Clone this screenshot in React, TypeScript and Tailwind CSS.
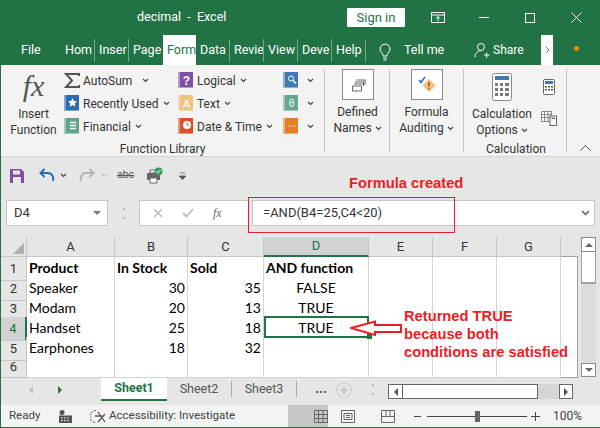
import React from 'react'

const ui = 'font-["Roboto",sans-serif]'
const cellFont = 'font-["Lato",sans-serif]'

const Caret = ({ className = '' }: { className?: string }) => (
  <svg width="7" height="5" viewBox="0 0 7 5" className={className}>
    <path d="M1 1l2.5 2.5L6 1" fill="none" stroke="#444" strokeWidth="1.2" />
  </svg>
)

function BookIcon({ color, children }: { color: string; children: React.ReactNode }) {
  return (
    <svg width="16" height="17" viewBox="0 0 16 17" className="shrink-0">
      <rect x="0" y="0" width="15" height="16" fill={color} opacity="0.55" />
      <rect x="2" y="0" width="13" height="15" fill={color} />
      {children}
    </svg>
  )
}

function FnRow({ icon, label, caretGap }: { icon: React.ReactNode; label: string; caretGap: string }) {
  return (
    <div className="flex h-[23px] items-center">
      <div className="flex w-[19px] justify-start">{icon}</div>
      <span className="text-[12px] whitespace-nowrap text-[#333]">{label}</span>
      <Caret className={caretGap} />
    </div>
  )
}

const tabs = ['Hom', 'Inser', 'Page', 'Form', 'Data', 'Revie', 'View', 'Deve', 'Help']

function TitleBar() {
  return (
    <div className="flex h-[35px] items-center text-white">
      <div className="w-[346px] pl-[136px] text-[12.5px] whitespace-nowrap">decimal&nbsp; -&nbsp; Excel</div>
      <div className="flex h-[19px] w-[58px] items-center justify-center rounded-[1px] bg-white text-[13px] text-[#217346]">Sign in</div>
      <svg width="14" height="11" viewBox="0 0 14 11" className="ml-[26px]">
        <path d="M.5.5h13v10H.5zM.5 3h13M7 9V4.5M5 6.500l2-2 2 2" fill="none" stroke="#fff" />
      </svg>
      <div className="ml-[34px] h-px w-[10px] bg-white" />
      <div className="ml-[36px] h-[10px] w-[10px] border border-white" />
      <svg width="11" height="11" viewBox="0 0 11 11" className="ml-[36px]">
        <path d="M.5.5l10 10M10.500.5l-10 10" stroke="#fff" fill="none" />
      </svg>
    </div>
  )
}

function TabRow() {
  return (
    <div className="flex h-[30px] items-stretch text-[12.5px] text-white">
      <div className="flex w-[60px] items-center pl-[20px]">File</div>
      {tabs.map((t, i) => (
        <div
          key={t}
          className={
            t === 'Form'
              ? 'flex w-[33px] items-center overflow-hidden bg-white pl-[4px] whitespace-nowrap text-[#217346]'
              : `my-[3px] flex h-[23px] w-[34px] items-center self-end overflow-hidden pl-[4px] whitespace-nowrap ${i === 2 ? '' : 'border-r border-[#6fa88a]'}`
          }
        >
          {t}
        </div>
      ))}
      <svg width="14" height="20" viewBox="0 0 14 20" className="mt-[7px] ml-[12px]">
        <path d="M7 2a5 5 0 0 0-3 9c1 1 1 2 1 3h4c0-1 0-2 1-3a5 5 0 0 0-3-9zM5 16h4M5.500 18h3" fill="none" stroke="#fff" />
      </svg>
      <div className="ml-[12px] flex w-[61px] items-center whitespace-nowrap">Tell me</div>
      <svg width="16" height="17" viewBox="0 0 16 17" className="mt-[7px] ml-[9px]">
        <path d="M7 1.500a3.500 3.500 0 1 1 0 7 3.500 3.500 0 0 1 0-7zM1 15c0-4 2.500-6 6-6.500M10 13h5.500M12.700 10.500v5.500" fill="none" stroke="#fff" />
      </svg>
      <div className="ml-[3px] flex w-[48px] items-center text-[12px] whitespace-nowrap">Share</div>
      <div className="flex w-[12px] items-center justify-center bg-white">
        <svg width="5" height="8" viewBox="0 0 5 8">
          <path d="M1 1l3 3-3 3" fill="none" stroke="#777" />
        </svg>
      </div>
      <div className="mt-[11px] ml-[21px] h-[5px] w-[5px] rounded-full bg-[#f28c0f]" />
    </div>
  )
}

function BigBox({ children }: { children: React.ReactNode }) {
  return (
    <div className="flex h-[31px] w-[32px] items-center justify-center border border-[#8a8a8a] bg-white">{children}</div>
  )
}

function Ribbon() {
  return (
    <div className="flex h-[92px] items-stretch border-b border-[#d5d5d5] bg-[#f3f3f3] text-[12px] leading-[16px] text-[#333]">
      {/* function library */}
      <div className="relative flex w-[323px] pt-[4px] pl-[3px]">
        <div className="flex w-[59px] flex-col items-center">
          <div className='h-[37px] font-["Liberation_Serif",serif] text-[30px] leading-[33px] text-[#555] italic'>fx</div>
          <div className="text-center leading-[16px]">
            Insert
            <br />
            Function
          </div>
        </div>
        <div className="flex w-[114px] flex-col pl-[1px]">
          <FnRow
            label="AutoSum"
            caretGap="ml-[10px]"
            icon={
              <svg width="16" height="15" viewBox="0 0 16 15">
                <path d="M15 3V1H2l6 6.500L2 14h13v-2" fill="none" stroke="#555" strokeWidth="2" />
              </svg>
            }
          />
          <FnRow
            label="Recently Used"
            caretGap="ml-[4px]"
            icon={
              <BookIcon color="#2b6cb0">
                <path d="M8.500 3l1.400 3 3.100.3-2.300 2.200.6 3.200-2.800-1.600-2.800 1.600.6-3.200L4 6.300 7.100 6z" fill="#fff" />
              </BookIcon>
            }
          />
          <FnRow
            label="Financial"
            caretGap="ml-[4px]"
            icon={
              <BookIcon color="#5fa58c">
                <path d="M6 4.500h6M6 7.500h6M6 10.500h6" stroke="#fff" strokeWidth="1.600" />
              </BookIcon>
            }
          />
        </div>
        <div className="flex w-[106px] flex-col pl-px">
          <FnRow
            label="Logical"
            caretGap="ml-[4px]"
            icon={
              <BookIcon color="#7f4fa8">
                <text x="8.500" y="12.500" textAnchor="middle" fontSize="12" fontWeight="700" fill="#fff" fontFamily="Liberation Sans">?</text>
              </BookIcon>
            }
          />
          <FnRow
            label="Text"
            caretGap="ml-[4px]"
            icon={
              <BookIcon color="#eec27f">
                <text x="8.500" y="12.500" textAnchor="middle" fontSize="11" fill="#fff" fontFamily="Liberation Sans">A</text>
              </BookIcon>
            }
          />
          <FnRow
            label="Date & Time"
            caretGap="ml-[4px]"
            icon={
              <BookIcon color="#d9502e">
                <circle cx="9" cy="7" r="4" fill="#fff" />
                <path d="M9 4.500V7h2" fill="none" stroke="#d9502e" />
              </BookIcon>
            }
          />
        </div>
        <div className="flex w-[40px] flex-col">
          <FnRow
            label=""
            caretGap="ml-[5px]"
            icon={
              <BookIcon color="#3f78b5">
                <circle cx="8" cy="6.500" r="2.500" fill="none" stroke="#fff" />
                <path d="M10 8.500l3 3" stroke="#fff" strokeWidth="1.500" />
              </BookIcon>
            }
          />
          <FnRow
            label=""
            caretGap="ml-[5px]"
            icon={
              <BookIcon color="#68a890">
                <text x="8.500" y="12" textAnchor="middle" fontSize="10" fill="#fff" fontFamily="Liberation Sans">θ</text>
              </BookIcon>
            }
          />
          <FnRow
            label=""
            caretGap="ml-[5px]"
            icon={
              <BookIcon color="#e67e22">
                <path d="M5 8h1.500M8 8h1.500M11 8h1.500" stroke="#fff" />
              </BookIcon>
            }
          />
        </div>
        <div className="absolute bottom-[-1px] left-0 w-[323px] text-center leading-[16px]">Function Library</div>
      </div>
      {/* defined names */}
      <div className="my-[4px] flex w-[65px] flex-col items-center border-l border-[#c4c4c4] pl-[1px]">
        <BigBox>
          <svg width="18" height="18" viewBox="0 0 18 18">
            <path d="M3.500 10h9v5h-9zM5 8h9M6 6h9M7.500 4h9M14.500 10V6M16 9V4" fill="none" stroke="#666" />
          </svg>
        </BigBox>
        <div className="mt-[4px] text-center leading-[16px]">
          Defined
          <br />
          <span className="inline-flex items-center gap-[3px]">
            Names <Caret />
          </span>
        </div>
      </div>
      {/* formula auditing */}
      <div className="my-[4px] flex w-[74px] flex-col items-center border-l border-[#c4c4c4]">
        <BigBox>
          <svg width="20" height="18" viewBox="0 0 20 18">
            <path d="M2 4l2 2.500L8 1" fill="none" stroke="#2b6cb0" strokeWidth="1.500" />
            <path d="M12 3l6.500 6.500L12 16 5.500 9.500z" fill="#f2c078" />
            <path d="M12 6v4.500M12 11.800v1.400" stroke="#c8401e" strokeWidth="1.500" />
          </svg>
        </BigBox>
        <div className="mt-[4px] text-center leading-[16px]">
          Formula
          <br />
          <span className="inline-flex items-center gap-[3px] whitespace-nowrap">
            Auditing <Caret />
          </span>
        </div>
      </div>
      {/* calculation */}
      <div className="relative my-[4px] flex w-[103px] border-l border-[#c4c4c4]">
        <div className="flex w-[76px] flex-col items-center pt-[4px]">
          <svg width="20" height="28" viewBox="0 0 20 28">
            <rect x=".5" y=".5" width="19" height="27" rx="2" fill="#fff" stroke="#8a8a8a" />
            <rect x="3" y="3" width="14" height="4" fill="#3f78b5" />
            <path d="M3 10h3v3H3zM8 10h3v3H8zM13 10h4v3h-4zM3 15h3v3H3zM8 15h3v3H8zM13 15h4v3h-4zM3 20h3v3H3zM8 20h3v3H8zM13 20h4v3h-4z" fill="#7a7a7a" />
          </svg>
          <div className="mt-[5px] text-center leading-[16px] whitespace-nowrap">
            Calculation
            <br />
            <span className="inline-flex items-center gap-[3px]">
              Options <Caret />
            </span>
          </div>
        </div>
        <div className="flex flex-col items-center pt-[10px] pl-[1px]">
          <svg width="12" height="16" viewBox="0 0 12 16">
            <rect x=".5" y=".5" width="11" height="15" rx="1" fill="#fff" stroke="#666" />
            <rect x="2" y="2" width="8" height="3" fill="#3f78b5" />
            <path d="M2 7h2v1.500H2zM5 7h2v1.500H5zM8 7h2v1.500H8zM2 10h2v1.500H2zM5 10h2v1.500H5zM8 10h2v1.500H8z" fill="#555" />
          </svg>
          <svg width="16" height="15" viewBox="0 0 16 15" className="mt-[16px]">
            <path d="M.5.5h10v10H.5zM.5 3.500h10M.5 6.500h10M3.500.5v10M7 .5v10" fill="#fff" stroke="#888" />
            <rect x="9" y="5" width="6.500" height="9.500" fill="#fff" stroke="#666" />
            <rect x="10.500" y="6.500" width="3.500" height="1.500" fill="#3f78b5" />
          </svg>
        </div>
        <div className="absolute bottom-[-5px] left-[1px] w-[102px] text-center leading-[16px]">Calculation</div>
      </div>
      <div className="my-[4px] flex flex-1 items-end justify-end border-l border-[#c4c4c4] pr-[9px] pb-[1px]">
        <svg width="11" height="6" viewBox="0 0 11 6">
          <path d="M.5 5.500l5-5 5 5" fill="none" stroke="#555" />
        </svg>
      </div>
    </div>
  )
}

function QuickAccess() {
  return (
    <div className="flex h-[37px] items-center bg-[#e6e6e6] pl-[9px]">
      <svg width="14" height="14" viewBox="0 0 14 14">
        <path d="M0 0h11l3 3v11H0z" fill="#7f4fa8" />
        <rect x="3" y="1.500" width="7" height="4" fill="#e6e6e6" />
        <rect x="3" y="8" width="8" height="6" fill="#e6e6e6" />
      </svg>
      <svg width="16" height="15" viewBox="0 0 16 15" className="ml-[15px]">
        <path d="M14 13c1-4-1-8-5-8H2M5.500 1L1.500 5l4 4" fill="none" stroke="#2b6cb0" strokeWidth="2" />
      </svg>
      <Caret className="ml-[5px]" />
      <svg width="16" height="15" viewBox="0 0 16 15" className="ml-[12px]">
        <path d="M2 13C1 9 3 5 7 5h7M10.500 1l4 4-4 4" fill="none" stroke="#b5b5b5" strokeWidth="2" />
      </svg>
      <svg width="7" height="5" viewBox="0 0 7 5" className="ml-[6px]">
        <path d="M1 1l2.500 2.500L6 1" fill="none" stroke="#aaa" />
      </svg>
      <span className="relative ml-[9px] w-[20px] text-[10.500px] leading-none text-[#555]">
        abc
        <span className="absolute top-[5px] left-0 h-px w-[17px] bg-[#555]" />
      </span>
      <svg width="18" height="17" viewBox="0 0 18 17" className="ml-[9px]">
        <path d="M1 6h13v7H1z" fill="#666" />
        <path d="M4 3h6v3H4zM4 11h7v5H4z" fill="#fff" stroke="#666" />
        <circle cx="12.500" cy="4.500" r="4" fill="#3d9a6b" />
        <path d="M10.500 4.500l1.500 1.500 2.500-3" fill="none" stroke="#fff" />
      </svg>
      <svg width="7" height="8" viewBox="0 0 7 8" className="ml-[15px]">
        <path d="M1 1h5M0 4h7L3.500 7.500z" fill="#555" stroke="#555" strokeWidth=".7" />
      </svg>
    </div>
  )
}

function FormulaBar() {
  return (
    <div className="flex h-[26px] bg-[#e6e6e6] pl-[5px] text-[13px] text-[#333]">
      <div className="flex w-[102px] items-center justify-between border border-[#c6c6c6] bg-white pr-[6px] pl-[7px]">
        D4
        <div className="h-0 w-0 border-x-[4px] border-t-[4px] border-x-transparent border-t-[#777]" />
      </div>
      <div className="flex w-[31px] items-center justify-center">
        <div className="h-[11px] w-[2px] border-y-2 border-[#bbb]" />
      </div>
      <div className="flex w-[110px] items-center border border-[#c6c6c6] bg-white pl-[13px]">
        <svg width="10" height="10" viewBox="0 0 10 10">
          <path d="M1 1l8 8M9 1L1 9" stroke="#bbb" strokeWidth="1.500" />
        </svg>
        <svg width="12" height="10" viewBox="0 0 12 10" className="ml-[19px]">
          <path d="M1 5l3.500 3.500L11 1" fill="none" stroke="#bbb" strokeWidth="1.800" />
        </svg>
        <span className='ml-[19px] font-["Liberation_Serif",serif] text-[12px] text-[#666] italic'>fx</span>
      </div>
      <div className="ml-[3px] flex w-[343px] items-center justify-between border border-[#c6c6c6] bg-white pr-[4px] pl-[10px]">
        =AND(B4=25,C4&lt;20)
        <svg width="9" height="6" viewBox="0 0 9 6">
          <path d="M1 1l3.500 3.500L8 1" fill="none" stroke="#777" strokeWidth="1.800" />
        </svg>
      </div>
    </div>
  )
}

type Row = { n: string; cells: string[]; bold?: boolean }
const rows: Row[] = [
  { n: '1', cells: ['Product', 'In Stock', 'Sold', 'AND function'], bold: true },
  { n: '2', cells: ['Speaker', '30', '35', 'FALSE'] },
  { n: '3', cells: ['Modam', '20', '13', 'TRUE'] },
  { n: '4', cells: ['Handset', '25', '18', 'TRUE'] },
  { n: '5', cells: ['Earphones', '18', '32', ''] },
  { n: '6', cells: ['', '', '', ''] },
]
const cols = ['A', 'B', 'C', 'D', 'E', 'F', 'G', '']

function Sheet() {
  return (
    <div className="flex h-[151px] bg-[#e6e6e6] pt-[11px]">
      <div className="relative w-[578px]">
        <div className="grid grid-cols-[26px_88px_73px_76px_105px_64px_64px_64px_17px] text-[13px] text-[#333]">
          <div className="flex h-[20px] items-end justify-end border-r border-b border-[#c6c6c6] p-[2px]">
            <div className="h-0 w-0 border-b-[11px] border-l-[11px] border-b-[#b0b0b0] border-l-transparent" />
          </div>
          {cols.map(c => (
            <div
              key={c}
              className={
                c === 'D'
                  ? 'flex h-[20px] items-center justify-center border-r border-b-2 border-[#c6c6c6] border-b-[#217346] bg-[#d2d2d2] text-[#217346]'
                  : c === ''
                    ? 'h-[20px] border-b border-[#a0a0a0]'
                    : 'flex h-[20px] items-center justify-center border-r border-b border-[#c6c6c6]'
              }
            >
              {c}
            </div>
          ))}
        </div>
        {rows.map(r => (
          <div key={r.n} className={`grid h-[20px] grid-cols-[26px_88px_73px_76px_105px_64px_64px_64px_17px] ${cellFont} text-[14px] text-black`}>
            <div
              className={
                r.n === '4'
                  ? `flex items-center justify-center border-r-2 border-b border-[#c6c6c6] border-r-[#217346] bg-[#d2d2d2] ${ui} text-[13px] text-[#217346]`
                  : `flex items-center justify-center border-r border-b border-[#c6c6c6] ${ui} text-[13px] text-[#333]`
              }
            >
              {r.n}
            </div>
            {r.cells.map((c, i) => (
              <div
                key={i}
                className={`flex items-center border-r border-b border-[#d4d4d4] bg-white px-[2px] pb-[2px] whitespace-nowrap ${r.bold ? 'font-bold' : ''} ${
                  r.bold || i === 0 ? 'justify-start' : i === 3 ? 'justify-center' : 'justify-end'
                }`}
              >
                {c}
              </div>
            ))}
            <div className="border-r border-b border-[#d4d4d4] bg-white" />
            <div className="border-r border-b border-[#d4d4d4] bg-white" />
            <div className="border-r border-b border-[#d4d4d4] bg-white" />
            <div className="border-r border-b border-[#a0a0a0] bg-white" />
          </div>
        ))}
        {/* active cell */}
        <div className="absolute top-[79px] left-[263px] h-[22px] w-[105px] border-2 border-[#217346]" />
        <div className="absolute top-[97px] left-[366px] h-[5px] w-[5px] bg-[#217346]" />
      </div>
      <div className="ml-[2px] flex w-[15px] flex-col">
        <div className="flex h-[15px] items-center justify-center border border-[#8a8a8a] bg-white">
          <div className="h-0 w-0 border-x-[4px] border-b-[4px] border-x-transparent border-b-[#666]" />
        </div>
        <div className="h-[32px] border-x border-b-2 border-[#a0a0a0] bg-white" />
        <div className="flex-1 bg-[#dcdcdc]" />
        <div className="flex h-[14px] items-center justify-center border border-[#8a8a8a] bg-white">
          <div className="h-0 w-0 border-x-[4px] border-t-[4px] border-x-transparent border-t-[#666]" />
        </div>
      </div>
    </div>
  )
}

function SheetTabs() {
  return (
    <div className="flex h-[28px] items-stretch bg-[#e6e6e6] text-[12.5px] text-[#555]">
      <div className="flex h-[25px] w-[100px] items-center pl-[28px]">
        <div className="h-0 w-0 border-y-[4px] border-r-[4px] border-y-transparent border-r-[#c0c0c0]" />
        <div className="ml-[25px] h-0 w-0 border-y-[4px] border-l-[4px] border-y-transparent border-l-[#217346]" />
      </div>
      <div className="flex h-[24px] w-[66px] items-center justify-center border-b-2 border-[#217346] bg-white font-bold text-[#217346]">Sheet1</div>
      <div className="my-[4px] flex h-[16px] w-[65px] items-center justify-center border-r border-[#aaa]">Sheet2</div>
      <div className="my-[4px] flex h-[16px] w-[65px] items-center justify-center border-r border-[#aaa]">Sheet3</div>
      <div className="flex h-[22px] w-[38px] items-center justify-center pl-[10px] text-[14px] font-bold text-[#217346]">...</div>
      <div className="ml-[1px] flex items-start pt-[5px]">
        <svg width="16" height="16" viewBox="0 0 16 16">
          <circle cx="8" cy="8" r="7.300" fill="none" stroke="#c6c6c6" />
          <path d="M8 4v8M4 8h8" stroke="#c6c6c6" strokeWidth="2" />
        </svg>
      </div>
      <div className="ml-[20px] flex w-[2px] items-start pt-[7px]">
        <div className="h-[11px] w-[2px] border-y-2 border-[#bbb]" />
      </div>
      <div className="mt-[7px] ml-[14px] flex h-[15px] w-[185px] items-stretch self-start">
        <div className="flex w-[15px] items-center justify-center border border-[#666] bg-white">
          <div className="h-0 w-0 border-y-[4px] border-r-[4px] border-y-transparent border-r-[#555]" />
        </div>
        <div className="w-[135px] border-y border-r border-[#666] bg-white" />
        <div className="flex-1 bg-[#d6d6d6]" />
        <div className="flex w-[14px] items-center justify-center border border-[#666] bg-white">
          <div className="h-0 w-0 border-y-[4px] border-l-[4px] border-y-transparent border-l-[#555]" />
        </div>
      </div>
    </div>
  )
}

function StatusBar() {
  return (
    <div className="flex h-[22px] items-stretch bg-[#f3f3f3] text-[11.500px] text-[#444]">
      <div className="flex w-[58px] items-center pl-[8px]">Ready</div>
      <div className="flex w-[31px] items-center">
        <svg width="13" height="13" viewBox="0 0 13 13">
          <circle cx="3" cy="2.500" r="2.500" fill="#555" />
          <path d="M0 5.500h13v7.500H0z" fill="#555" />
          <path d="M2 8h1.500M5 8h1.500M8 8h1.500M2 10.500h1.500M5 10.500h1.500M8 10.500h1.500" stroke="#fff" />
        </svg>
      </div>
      <div className="flex w-[198px] items-center whitespace-nowrap">
        <svg width="16" height="15" viewBox="0 0 16 15" className="mr-[3px]">
          <path d="M6 1.500a6 6 0 0 0 0 12" fill="none" stroke="#555" strokeDasharray="2 1" />
          <path d="M8 3l7 10M15 5l-7 8M5 7h7" stroke="#555" strokeWidth="1.300" />
        </svg>
        Accessibility: Investigate
      </div>
      <div className="flex w-[40px] items-center justify-end bg-[#c6c6c6] pr-[13px]">
        <svg width="14" height="13" viewBox="0 0 14 13" className="mr-[-13px]">
          <path d="M.5.500h13v12H.5zM.5 4.500h13M.5 8.500h13M4.500.5v12M9 .5v12" fill="none" stroke="#666" />
        </svg>
      </div>
      <div className="ml-[13px] flex items-center">
        <svg width="14" height="13" viewBox="0 0 14 13">
          <path d="M.5.500h13v12H.5zM3 3.500h8v6H3zM5 5.500h4M5 7.500h4" fill="none" stroke="#666" />
        </svg>
      </div>
      <div className="ml-[26px] flex items-center">
        <svg width="14" height="13" viewBox="0 0 14 13">
          <path d="M.5.500h13v12H.5zM.5 6.500h13M5 .5v6M9 .5v6" fill="none" stroke="#666" />
        </svg>
      </div>
      <div className="ml-[19px] flex items-center">
        <div className="h-px w-[7px] bg-[#444]" />
        <div className="relative ml-[6px] h-px w-[100px] bg-[#444]">
          <div className="absolute top-[-5px] left-[48px] h-[11px] w-[5px] bg-[#666]" />
        </div>
        <div className="relative ml-[4px] h-px w-[9px] bg-[#444]">
          <div className="absolute top-[-4px] left-[4px] h-[9px] w-px bg-[#444]" />
        </div>
      </div>
      <div className="ml-[13px] flex items-center text-[12px]">100%</div>
    </div>
  )
}

function Annotations() {
  const red = 'text-[#ed1c24]'
  return (
    <div className='font-["Liberation_Sans",sans-serif] font-bold'>
      <div className={`absolute top-[175px] left-[348px] text-[14.700px] leading-[17px] whitespace-nowrap ${red}`}>Formula created</div>
      <div className="absolute top-[197px] left-[247px] h-[36px] w-[207px] border border-[#ed1c24]" />
      <div className={`absolute top-[307px] left-[403px] text-[14.700px] leading-[18px] whitespace-nowrap ${red}`}>
        Returned TRUE
        <br />
        because both
        <br />
        conditions are satisfied
      </div>
      <svg width="54" height="16" viewBox="0 0 54 16" className="absolute top-[320px] left-[349px]">
        <path d="M1 8l24-6.500V5h26v7H25v3z" fill="#fff" stroke="#ed1c24" strokeWidth="2" />
      </svg>
    </div>
  )
}

export default function App() {
  return (
    <div className={`relative h-[428px] w-[600px] overflow-hidden border-b border-l border-[#217346] bg-[#217346] ${ui}`}>
      <TitleBar />
      <TabRow />
      <Ribbon />
      <QuickAccess />
      <div className="h-[6px] bg-[#e6e6e6]" />
      <FormulaBar />
      <Sheet />
      <SheetTabs />
      <StatusBar />
      <Annotations />
    </div>
  )
}
